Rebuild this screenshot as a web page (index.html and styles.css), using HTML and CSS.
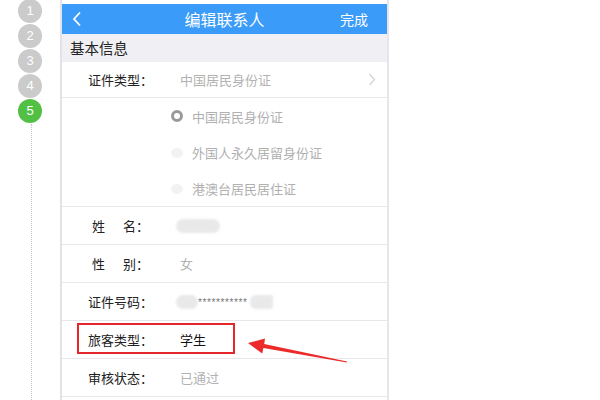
FILE: index.html
```html
<!DOCTYPE html>
<html lang="zh">
<head>
<meta charset="utf-8">
<link rel="stylesheet" href="styles.css">
</head>
<body>
<div class="page">
  <div class="steps">
    <div class="step">1</div>
    <div class="step">2</div>
    <div class="step">3</div>
    <div class="step">4</div>
    <div class="step step-active">5</div>
    <div class="step-line"></div>
  </div>
  <div class="phone">
    <div class="navbar">
      <svg class="back" width="10" height="16" viewBox="0 0 10 16"><path d="M8 1.5 L2 8 L8 14.5" fill="none" stroke="#fff" stroke-width="1.8"/></svg>
      <div class="title">编辑联系人</div>
      <div class="done">完成</div>
    </div>
    <div class="section">基本信息</div>
    <div class="row row-first">
      <div class="label">证件类型：</div>
      <div class="value muted">中国居民身份证</div>
      <svg class="chev" width="8" height="13" viewBox="0 0 8 13"><path d="M1.5 1 L6.5 6.5 L1.5 12" fill="none" stroke="#d2d2d2" stroke-width="1.2"/></svg>
    </div>
    <div class="radios">
      <div class="radio-item"><span class="radio radio-on"></span><span>中国居民身份证</span></div>
      <div class="radio-item"><span class="radio"></span><span>外国人永久居留身份证</span></div>
      <div class="radio-item"><span class="radio"></span><span>港澳台居民居住证</span></div>
    </div>
    <div class="row">
      <div class="label"><span class="spread">姓</span>名：</div>
      <div class="value"><span class="blob blob-name"></span></div>
    </div>
    <div class="row">
      <div class="label"><span class="spread">性</span>别：</div>
      <div class="value muted">女</div>
    </div>
    <div class="row">
      <div class="label">证件号码：</div>
      <div class="value id"><span class="blob blob-id"></span><span class="stars">***********</span><span class="blob blob-id2"></span></div>
    </div>
    <div class="row row-mark">
      <div class="label">旅客类型：</div>
      <div class="value dark">学生</div>
      <div class="mark-box"></div>
    </div>
    <div class="row">
      <div class="label">审核状态：</div>
      <div class="value muted">已通过</div>
    </div>
  </div>
</div>
<svg class="arrow" width="600" height="400" viewBox="0 0 600 400">
  <polygon points="248,343 265,338.5 264.2,344 347,361.4 346.8,362.6 263.4,348 262.2,353.5" fill="#ec2a2a"/>
</svg>
</body>
</html>
```
FILE: styles.css
```css
html, body {
  margin: 0;
  padding: 0;
  background: #fff;
  width: 600px;
  height: 400px;
  overflow: hidden;
  font-family: "Noto Sans CJK SC", "Noto Sans", sans-serif;
}
.page {
  display: flex;
  align-items: flex-start;
  height: 400px;
}
.steps {
  width: 60px;
  display: flex;
  flex-direction: column;
  align-items: center;
  gap: 1px;
  margin-top: -1px;
  height: 401px;
  box-sizing: border-box;
}
.step {
  width: 24px;
  height: 24px;
  border-radius: 50%;
  background: #cbcbcb;
  color: #fff;
  font-family: "Liberation Sans", sans-serif;
  font-size: 13px;
  line-height: 24px;
  text-align: center;
  flex: none;
}
.step-active {
  background: #52bf45;
}
.step-line {
  flex: 1;
  width: 0;
  border-left: 1px dotted #c4c4c4;
  margin-left: 2px;
}
.phone {
  width: 325px;
  border-left: 2px solid #e3e2e8;
  border-right: 2px solid #e6e6ea;
  height: 400px;
  background: #fff;
}
.navbar {
  margin-top: 4px;
  height: 30px;
  background: #3a9bf8;
  display: grid;
  grid-template-columns: 1fr auto 1fr;
  align-items: center;
  color: #fff;
}
.back {
  margin-left: 10px;
  display: block;
}
.title {
  text-align: center;
  font-size: 16px;
}
.done {
  font-size: 14px;
  text-align: right;
  padding-right: 19px;
}
.section {
  height: 28px;
  background: #efeff4;
  font-size: 14.5px;
  line-height: 27px;
  color: #222;
  padding-left: 8px;
}
.row {
  height: 37px;
  border-bottom: 1px solid #e7e7ec;
  display: flex;
  align-items: center;
  position: relative;
  font-size: 13px;
}
.row-first {
  height: 35px;
}
.label {
  width: 92px;
  padding-left: 26px;
  color: #222;
  flex: none;
}
.spread {
  margin-left: 4px;
  margin-right: 18px;
}
.value {
  flex: 1;
  display: flex;
  align-items: center;
}
.muted {
  color: #b2b2b2;
}
.dark {
  color: #111;
}
.chev {
  margin-right: 11px;
}
.radios {
  height: 108px;
  border-bottom: 1px solid #e7e7ec;
  display: flex;
  flex-direction: column;
}
.radio-item {
  height: 36px;
  display: flex;
  align-items: center;
  padding-left: 109px;
  font-size: 13px;
  color: #b0b0b0;
}
.radio-item:first-child {
  height: 37px;
}
.radio {
  width: 12px;
  height: 10px;
  border-radius: 50%;
  background: #f2f2f2;
  margin-right: 9px;
  box-sizing: border-box;
  margin-top: 2px;
}
.radio-on {
  height: 12px;
  margin-top: 0;
  background: #fff;
  border: 3px solid #9a9a9a;
}
.blob {
  display: inline-block;
  background: #e9e9e9;
  border-radius: 7px;
  filter: blur(0.8px);
}
.blob-name {
  width: 44px;
  height: 14px;
  margin-left: -4px;
}
.blob-id {
  width: 22px;
  height: 14px;
  margin-left: -4px;
}
.blob-id2 {
  width: 23px;
  height: 14px;
  margin-left: 3px;
  border-radius: 6px 3px 3px 6px;
}
.stars {
  font-family: "Liberation Sans", sans-serif;
  font-size: 10px;
  color: #777;
  letter-spacing: 0.6px;
  margin-top: 2px;
}
.mark-box {
  position: absolute;
  left: 15px;
  top: 2px;
  width: 154px;
  height: 27px;
  border: 2px solid #e5262a;
}
.arrow {
  position: absolute;
  left: 0;
  top: 0;
  pointer-events: none;
}
```
